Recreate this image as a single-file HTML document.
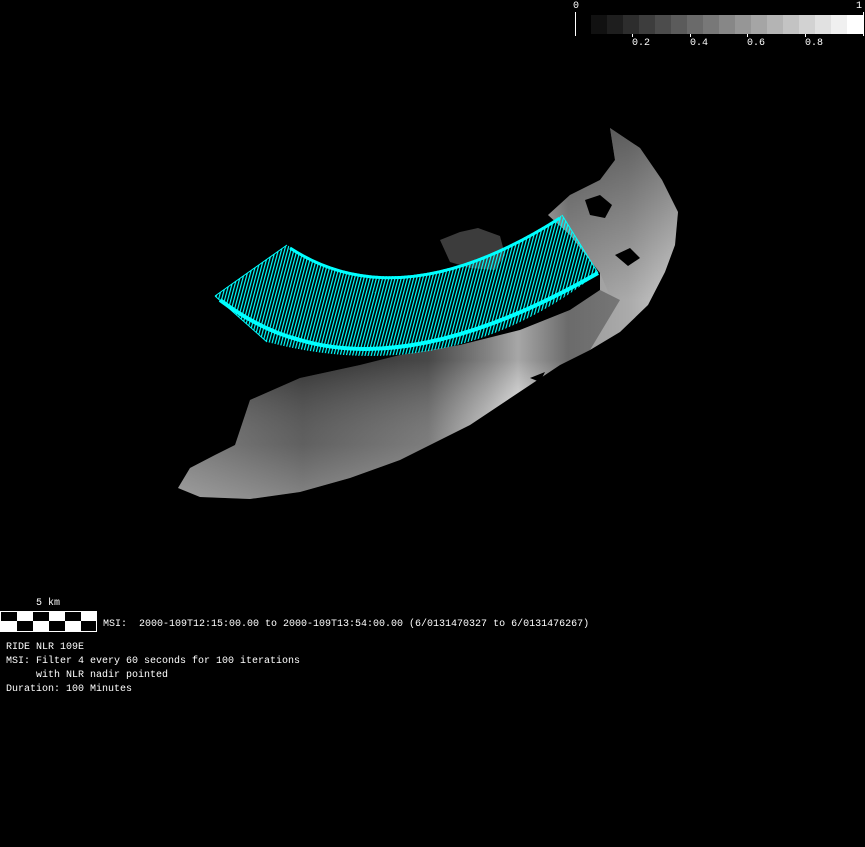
<!DOCTYPE html>
<html><head><meta charset="utf-8"><style>
html,body{margin:0;padding:0;background:#000;width:865px;height:847px;overflow:hidden}
.t{position:absolute;color:#fff;font-family:"Liberation Mono","DejaVu Sans Mono",monospace;font-size:10px;white-space:pre;line-height:12px}
</style></head><body>
<svg width="865" height="847" style="position:absolute;left:0;top:0">
<defs>
<linearGradient id="g1" x1="178" y1="0" x2="678" y2="0" gradientUnits="userSpaceOnUse">
<stop offset="0" stop-color="#6a6a6a"/><stop offset="0.25" stop-color="#444"/><stop offset="0.5" stop-color="#666"/><stop offset="0.62" stop-color="#bbb"/><stop offset="0.68" stop-color="#eee"/><stop offset="0.78" stop-color="#999"/><stop offset="0.9" stop-color="#aaa"/><stop offset="1" stop-color="#ccc"/>
</linearGradient>
<linearGradient id="g2" x1="0" y1="360" x2="0" y2="500" gradientUnits="userSpaceOnUse">
<stop offset="0" stop-color="#000" stop-opacity="0.3"/><stop offset="0.6" stop-color="#fff" stop-opacity="0.15"/><stop offset="1" stop-color="#fff" stop-opacity="0.35"/>
</linearGradient>
<linearGradient id="g4" x1="0" y1="130" x2="0" y2="300" gradientUnits="userSpaceOnUse">
<stop offset="0" stop-color="#000" stop-opacity="0.45"/><stop offset="1" stop-color="#000" stop-opacity="0"/>
</linearGradient>
<pattern id="hp" width="3" height="3" patternUnits="userSpaceOnUse" patternTransform="rotate(15)">
<rect width="1.2" height="3" fill="#0ff"/>
</pattern>
</defs>
<polygon fill="url(#g1)" points="178,488 190,468 215,455 235,445 250,400 300,378 360,365 400,355 460,345 520,330 570,310 600,290 600,273 570,235 548,215 570,195 600,180 615,160 610,128 640,148 662,180 678,212 675,245 665,272 648,305 620,332 590,350 560,365 530,385 500,405 470,425 430,445 400,460 350,478 300,492 250,499 200,497"/>
<polygon fill="url(#g2)" points="178,488 190,468 215,455 235,445 250,400 300,378 360,365 400,355 460,345 520,330 570,310 600,290 620,300 590,350 560,365 530,385 500,405 470,425 430,445 400,460 350,478 300,492 250,499 200,497"/>
<polygon fill="url(#g4)" points="600,273 570,235 548,215 570,195 600,180 615,160 610,128 640,148 662,180 678,212 675,245 665,272 648,305 620,320"/>
<polygon fill="#000" points="585,200 600,195 612,205 605,218 590,215"/>
<polygon fill="#000" points="615,255 630,248 640,258 628,266"/>
<polygon fill="#000" points="530,378 545,372 540,382"/>
<polygon fill="#3c3c3c" points="440,240 460,232 478,228 500,236 505,255 495,270 470,268 450,262"/>
<path fill="url(#hp)" d="M215,296 L287,245 Q400,320 562,215 L598,273 Q450,390 267,342 Z"/>
<path fill="none" stroke="#0ff" stroke-width="4" d="M220,300 Q260,330 300,340 Q420,375 598,273"/>
<path fill="none" stroke="#0ff" stroke-width="3" d="M290,248 Q400,320 560,218"/>
<path fill="none" stroke="#0ff" stroke-width="1" d="M215,296 L287,245 M562,215 L598,273 M215,296 L267,342"/>
<g>
<rect x="591" y="15" width="17" height="19" fill="#111"/>
<rect x="607" y="15" width="17" height="19" fill="#1e1e1e"/>
<rect x="623" y="15" width="17" height="19" fill="#2d2d2d"/>
<rect x="639" y="15" width="17" height="19" fill="#3d3d3d"/>
<rect x="655" y="15" width="17" height="19" fill="#4c4c4c"/>
<rect x="671" y="15" width="17" height="19" fill="#5b5b5b"/>
<rect x="687" y="15" width="17" height="19" fill="#6a6a6a"/>
<rect x="703" y="15" width="17" height="19" fill="#787878"/>
<rect x="719" y="15" width="17" height="19" fill="#878787"/>
<rect x="735" y="15" width="17" height="19" fill="#969696"/>
<rect x="751" y="15" width="17" height="19" fill="#a5a5a5"/>
<rect x="767" y="15" width="17" height="19" fill="#b4b4b4"/>
<rect x="783" y="15" width="17" height="19" fill="#c3c3c3"/>
<rect x="799" y="15" width="17" height="19" fill="#d2d2d2"/>
<rect x="815" y="15" width="17" height="19" fill="#e1e1e1"/>
<rect x="831" y="15" width="17" height="19" fill="#f0f0f0"/>
<rect x="847" y="15" width="17" height="19" fill="#fff"/>
</g>
<rect x="575" y="12" width="1" height="24" fill="#fff"/>
<rect x="863" y="12" width="1" height="24" fill="#fff"/>
<rect x="632" y="34" width="1" height="3" fill="#fff"/>
<rect x="690" y="34" width="1" height="3" fill="#fff"/>
<rect x="747" y="34" width="1" height="3" fill="#fff"/>
<rect x="805" y="34" width="1" height="3" fill="#fff"/>
<rect x="0" y="611" width="97" height="21" fill="#fff"/>
<rect x="1" y="612" width="16" height="9" fill="#000"/>
<rect x="33" y="612" width="16" height="9" fill="#000"/>
<rect x="65" y="612" width="16" height="9" fill="#000"/>
<rect x="17" y="621" width="16" height="10" fill="#000"/>
<rect x="49" y="621" width="16" height="10" fill="#000"/>
<rect x="81" y="621" width="15" height="10" fill="#000"/>
</svg>
<div class="t" style="left:573px;top:1px">0</div>
<div class="t" style="left:856px;top:1px">1</div>
<div class="t" style="left:632px;top:38px">0.2</div>
<div class="t" style="left:690px;top:38px">0.4</div>
<div class="t" style="left:747px;top:38px">0.6</div>
<div class="t" style="left:805px;top:38px">0.8</div>
<div class="t" style="left:36px;top:598px">5 km</div>
<div class="t" style="left:103px;top:619px">MSI:  2000-109T12:15:00.00 to 2000-109T13:54:00.00 (6/0131470327 to 6/0131476267)</div>
<div class="t" style="left:6px;top:642px">RIDE NLR 109E</div>
<div class="t" style="left:6px;top:656px">MSI: Filter 4 every 60 seconds for 100 iterations</div>
<div class="t" style="left:6px;top:670px">     with NLR nadir pointed</div>
<div class="t" style="left:6px;top:684px">Duration: 100 Minutes</div>
</body></html>
